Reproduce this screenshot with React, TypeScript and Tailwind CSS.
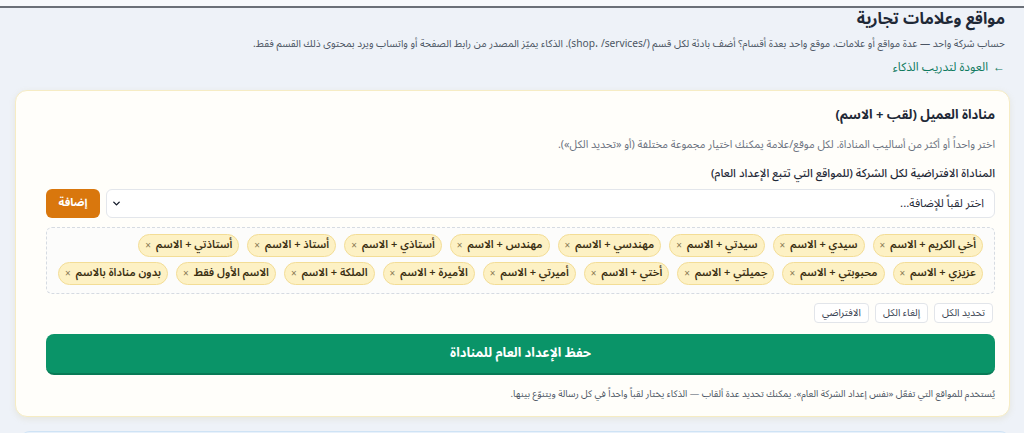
import { ChevronDown } from 'lucide-react';

const TITLES = [
	'أخي الكريم + الاسم',
	'سيدي + الاسم',
	'سيدتي + الاسم',
	'مهندسي + الاسم',
	'مهندس + الاسم',
	'أستاذي + الاسم',
	'أستاذ + الاسم',
	'أستاذتي + الاسم',
	'عزيزي + الاسم',
	'محبوبتي + الاسم',
	'جميلتي + الاسم',
	'أختي + الاسم',
	'أميرتي + الاسم',
	'الأميرة + الاسم',
	'الملكة + الاسم',
	'الاسم الأول فقط',
	'بدون مناداة بالاسم',
];

function Chip({ label }: { label: string }) {
	return (
		<span className="inline-flex items-center gap-[5px] h-[23px] px-[6px] rounded-full bg-[#fdf1c4] border border-[#f3dd96] text-[11px] font-semibold text-[#3a2f12]">
			<span>{label}</span>
			<span className="text-[10px] text-[#8a7a55] font-normal">×</span>
		</span>
	);
}

function SmallButton({ text }: { text: string }) {
	return (
		<button className="h-[20px] px-[7px] rounded-[4px] border border-[#e2e5ea] bg-white text-[10px] leading-none text-[#374151]">
			{text}
		</button>
	);
}

export default function App() {
	return (
		<div
			dir="rtl"
			className="w-[1024px] h-[433px] overflow-hidden bg-[#eef2f8] text-[#1f2937]"
			style={{ fontFamily: '"Noto Sans Arabic", "Noto Sans", sans-serif' }}
		>
			<div className="h-[6px] bg-[#f7f9fc]" />
			<div className="h-[2px] bg-[#6b7078]" />

			{/* رأس الصفحة */}
			<div className="pr-[19px] pl-[12px]">
				<h1 className="text-[16px] font-bold leading-[22px] text-[#1f2937]">مواقع وعلامات تجارية</h1>
				<p className="text-[10.2px] leading-[16px] mt-[6px] text-[#4b5563]">
					حساب شركة واحد — عدة مواقع أو علامات. موقع واحد بعدة أقسام؟ أضف بادئة لكل قسم (/shop، /services). الذكاء يميّز المصدر من رابط الصفحة أو واتساب ويرد بمحتوى ذلك القسم فقط.
				</p>
				<a className="flex items-center gap-[5px] text-[12px] leading-[18px] mt-[7px] text-[#0f7a5f]">
					<span>←</span>
					<span>العودة لتدريب الذكاء</span>
				</a>
			</div>

			{/* البطاقة */}
			<div className="mt-[13px] ml-[15px] mr-[14px] rounded-[12px] border border-[#f6ecc4] bg-[#fffefa] shadow-[0_2px_6px_rgba(180,160,90,0.15)] pr-[14px] pl-[30px] pt-[15px] pb-[15px]">
				<h2 className="text-[13px] font-bold leading-[18px] text-[#1f2937]">مناداة العميل (لقب + الاسم)</h2>
				<p className="text-[10.8px] leading-[14px] mt-[14px] text-[#6b7280]">
					اختر واحداً أو أكثر من أساليب المناداة. لكل موقع/علامة يمكنك اختيار مجموعة مختلفة (أو «تحديد الكل»).
				</p>
				<div className="text-[11.5px] font-medium leading-[16px] mt-[13px] text-[#1f2937]">
					المناداة الافتراضية لكل الشركة (للمواقع التي تتبع الإعداد العام)
				</div>

				<div className="flex items-center gap-[6px] mt-[8px]">
					<div className="flex-1 h-[29px] rounded-[6px] border border-[#e3e6eb] bg-white flex items-center justify-between pr-[10px] pl-[4px]">
						<span className="text-[11.5px] text-[#1f2937]">اختر لقباً للإضافة...</span>
						<ChevronDown className="w-[11px] h-[11px] text-[#111827]" strokeWidth={3} />
					</div>
					<button className="h-[29px] w-[54px] rounded-[6px] bg-[#d9770d] text-white text-[11px] font-bold">
						إضافة
					</button>
				</div>

				<div className="mt-[9px] rounded-[6px] border border-dashed border-[#d6dbe2] bg-[#fcfcfb] pr-[11px] pl-[4px] pt-[6px] pb-[8px]">
					<div className="flex flex-wrap gap-x-[8px] gap-y-[5px]">
						{TITLES.map((t) => (
							<Chip key={t} label={t} />
						))}
					</div>
				</div>

				<div className="flex gap-[6px] mt-[9px] pr-[2px]">
					<SmallButton text="تحديد الكل" />
					<SmallButton text="إلغاء الكل" />
					<SmallButton text="الافتراضي" />
				</div>

				<button className="w-full h-[41px] mt-[11px] rounded-[8px] bg-[#0a9468] border-b-2 border-[#087a56] text-white text-[13px] font-bold">
					حفظ الإعداد العام للمناداة
				</button>

				<p className="text-[9.5px] leading-[14px] mt-[12px] text-[#4b5563]">
					يُستخدم للمواقع التي تفعّل «نفس إعداد الشركة العام». يمكنك تحديد عدة ألقاب — الذكاء يختار لقباً واحداً في كل رسالة ويتنوّع بينها.
				</p>
			</div>

			<div className="mt-[14px] ml-[20px] mr-[14px] h-[20px] rounded-t-[10px] border-t border-[#cfe3f5] bg-[#e8f1fb]" />
		</div>
	);
}
